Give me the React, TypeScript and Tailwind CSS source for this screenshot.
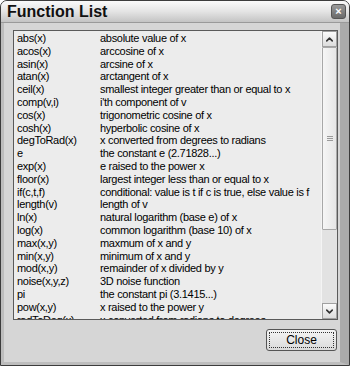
import { ChevronUp, ChevronDown } from 'lucide-react';

const functions: [string, string][] = [
  ['abs(x)', 'absolute value of x'],
  ['acos(x)', 'arccosine of x'],
  ['asin(x)', 'arcsine of x'],
  ['atan(x)', 'arctangent of x'],
  ['ceil(x)', 'smallest integer greater than or equal to x'],
  ['comp(v,i)', "i'th component of v"],
  ['cos(x)', 'trigonometric cosine of x'],
  ['cosh(x)', 'hyperbolic cosine of x'],
  ['degToRad(x)', 'x converted from degrees to radians'],
  ['e', 'the constant e (2.71828...)'],
  ['exp(x)', 'e raised to the power x'],
  ['floor(x)', 'largest integer less than or equal to x'],
  ['if(c,t,f)', 'conditional: value is t if c is true, else value is f'],
  ['length(v)', 'length of v'],
  ['ln(x)', 'natural logarithm (base e) of x'],
  ['log(x)', 'common logarithm (base 10) of x'],
  ['max(x,y)', 'maxmum of x and y'],
  ['min(x,y)', 'minimum of x and y'],
  ['mod(x,y)', 'remainder of x divided by y'],
  ['noise(x,y,z)', '3D noise function'],
  ['pi', 'the constant pi (3.1415...)'],
  ['pow(x,y)', 'x raised to the power y'],
  ['radToDeg(x)', 'x converted from radians to degrees'],
];

export default function App() {
  return (
    <div className="w-[350px] h-[367px] bg-white">
      <div
        className="w-[350px] h-[366px] flex flex-col rounded-t-[7px] border border-[#3c3c3c] bg-[#d6d6d6] overflow-hidden"
        style={{ fontFamily: '"Liberation Sans", Arial, sans-serif' }}
      >
        {/* title bar */}
        <div className="h-[22px] shrink-0 flex items-center justify-between pl-[6px] pr-[3px] bg-gradient-to-b from-[#fafafa] via-[#e4e4e4] to-[#c4c4c4] border-b border-[#9a9a9a]">
          <span className="text-[16px] leading-none font-bold text-[#111]">Function List</span>
          <div className="w-[15px] h-[15px] rounded-[3px] bg-gradient-to-b from-[#9a9a9a] to-[#6a6a6a] border border-[#555] flex items-center justify-center text-white text-[11px] font-bold leading-none">
            ×
          </div>
        </div>

        {/* body */}
        <div className="flex-1 flex flex-col border-l-[3px] border-l-[#bdbdbd] border-r-[9px] border-r-[#ababab] border-b-[3px] border-b-[#bdbdbd] pl-[9px] pr-[2px] pt-[7px]">
          <div className="h-[290px] flex border border-[#5a5a5a] bg-[#ececec]">
            <div className="flex-1 overflow-hidden pt-[1px]">
              {functions.map(([name, desc]) => (
                <div key={name} className="flex h-[12.8px] items-center text-[11px] leading-[12.8px] text-black tracking-[-0.3px] whitespace-nowrap">
                  <span className="w-[86px] pl-[3px] shrink-0">{name}</span>
                  <span>{desc}</span>
                </div>
              ))}
            </div>
            {/* scrollbar */}
            <div className="w-[16px] shrink-0 flex flex-col bg-[#e2e2e2] border-l border-[#f4f4f4]">
              <div className="h-[16px] flex items-center justify-center border border-[#a0a0a0] bg-gradient-to-b from-[#fbfbfb] to-[#dcdcdc]">
                <ChevronUp size={11} strokeWidth={3.5} className="text-[#333]" />
              </div>
              <div className="h-[183px] flex items-center justify-center border border-[#a8a8a8] bg-gradient-to-r from-[#f6f6f6] to-[#e6e6e6] rounded-[1px]">
                <div className="flex flex-col gap-[1px]">
                  <div className="w-[6px] h-[1px] bg-[#9a9a9a]" />
                  <div className="w-[6px] h-[1px] bg-[#9a9a9a]" />
                  <div className="w-[6px] h-[1px] bg-[#9a9a9a]" />
                </div>
              </div>
              <div className="flex-1" />
              <div className="h-[16px] flex items-center justify-center border border-[#a0a0a0] bg-gradient-to-b from-[#fbfbfb] to-[#dcdcdc]">
                <ChevronDown size={11} strokeWidth={3.5} className="text-[#333]" />
              </div>
            </div>
          </div>

          <div className="flex justify-end pt-[9px] pr-[1px]">
            <button className="w-[71px] h-[22px] rounded-[3px] border border-[#555] bg-gradient-to-b from-[#f4f4f4] to-[#dadada] p-[2px]">
              <div className="w-full h-full border border-dotted border-[#333] flex items-center justify-center text-[12px] text-black">
                Close
              </div>
            </button>
          </div>
        </div>
      </div>
    </div>
  );
}
